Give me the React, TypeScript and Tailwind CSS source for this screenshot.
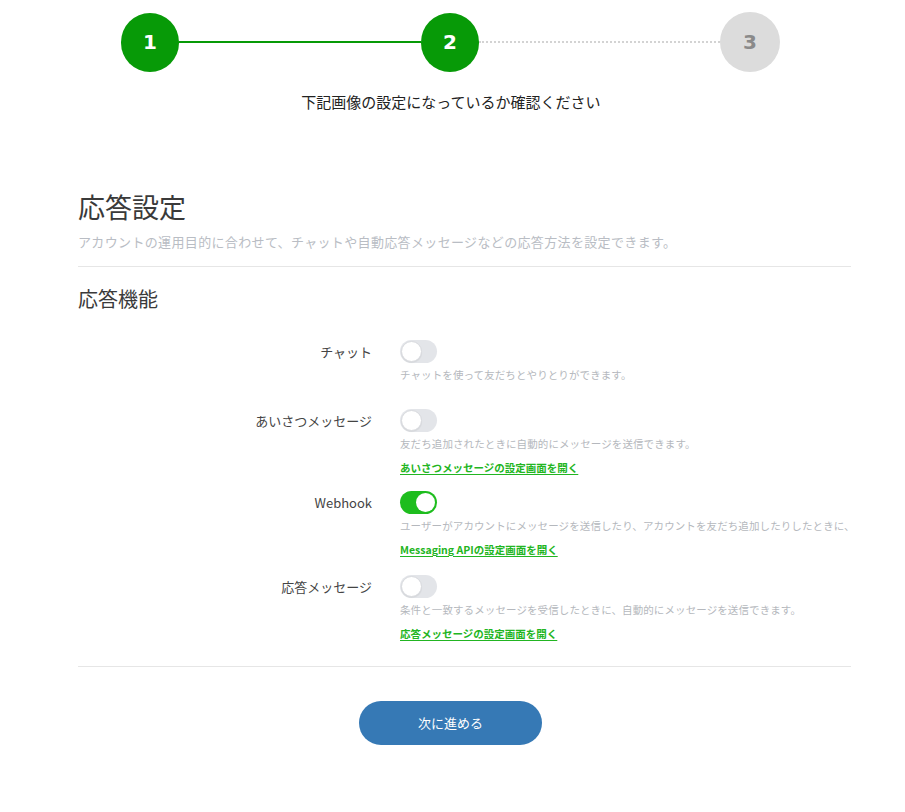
import React from 'react';

type Item = {
  label: string;
  on: boolean;
  desc: string;
  link?: string;
  pb: string;
};

const items: Item[] = [
  {label: 'チャット', on: false, desc: 'チャットを使って友だちとやりとりができます。', pb: 'pb-[26px]'},
  {
    label: 'あいさつメッセージ',
    on: false,
    desc: '友だち追加されたときに自動的にメッセージを送信できます。',
    link: 'あいさつメッセージの設定画面を開く',
    pb: 'pb-[15px]',
  },
  {
    label: 'Webhook',
    on: true,
    desc: 'ユーザーがアカウントにメッセージを送信したり、アカウントを友だち追加したりしたときに、',
    link: 'Messaging APIの設定画面を開く',
    pb: 'pb-[17px]',
  },
  {
    label: '応答メッセージ',
    on: false,
    desc: '条件と一致するメッセージを受信したときに、自動的にメッセージを送信できます。',
    link: '応答メッセージの設定画面を開く',
    pb: '',
  },
];

function Toggle({on}: {on: boolean}) {
  return on ? (
    <div className="w-[37px] h-[23px] rounded-full bg-[#1ebd1e] flex items-center justify-end px-[2px]">
      <div className="w-[19px] h-[19px] rounded-full bg-white" />
    </div>
  ) : (
    <div className="w-[37px] h-[23px] rounded-full bg-[#e3e5e9] flex items-center px-[1px]">
      <div className="w-[21px] h-[21px] rounded-full bg-white border border-[#d8dade] shadow-[0_1px_1px_rgba(0,0,0,0.06)]" />
    </div>
  );
}

export default function App() {
  return (
    <div className="w-[905px] h-[812px] bg-white font-['Noto_Sans_CJK_JP',sans-serif] text-[#333]">
      {/* stepper */}
      <div className="pt-[12px] pl-[121px] flex items-center">
        <div className="w-[58px] h-[59px] rounded-full flex items-center justify-center bg-[#079a07] text-white font-['DejaVu_Sans',sans-serif] font-bold text-[20px]">
          1
        </div>
        <div className="w-[242px] h-[2px] bg-[#079a07]" />
        <div className="w-[58px] h-[59px] rounded-full flex items-center justify-center bg-[#079a07] text-white font-['DejaVu_Sans',sans-serif] font-bold text-[20px]">
          2
        </div>
        <div className="w-[241px] border-t-2 border-dotted border-[#d3d3d3]" />
        <div className="w-[60px] h-[60px] rounded-full flex items-center justify-center bg-[#dcdcdc] text-[#8a8a8a] font-['DejaVu_Sans',sans-serif] font-bold text-[20px]">
          3
        </div>
      </div>
      <p className="mt-[19px] pr-[3px] text-center text-[15px] leading-[22px] text-[#222]">
        下記画像の設定になっているか確認ください
      </p>

      <div className="pl-[78px] pr-[54px]">
        <h1 className="mt-[76px] text-[27px] leading-[36px] text-[#3a3a3a]">応答設定</h1>
        <p className="mt-[7px] text-[13px] leading-[20px] tracking-[0.35px] text-[#b9bdc4]">
          アカウントの運用目的に合わせて、チャットや自動応答メッセージなどの応答方法を設定できます。
        </p>
        <div className="mt-[14px] border-t border-[#e6e6e6]" />
        <h2 className="mt-[18px] text-[20px] leading-[28px] text-[#3a3a3a]">応答機能</h2>

        <div className="mt-[27px] flex flex-col">
          {items.map((it) => (
            <div key={it.label} className={`flex gap-[28px] ${it.pb}`}>
              <div className="w-[294px] shrink-0 text-right text-[13px] leading-[23px] text-[#444]">
                {it.label}
              </div>
              <div className="flex-1 min-w-0">
                <Toggle on={it.on} />
                <p className="mt-[4px] text-[10.5px] leading-[16px] tracking-[0.1px] text-[#b5b8bd] whitespace-nowrap">
                  {it.desc}
                </p>
                {it.link && (
                  <a className="mt-[8px] block w-fit text-[10.5px] leading-[16px] font-bold text-[#22b522] underline underline-offset-2">
                    {it.link}
                  </a>
                )}
              </div>
            </div>
          ))}
        </div>

        <div className="mt-[24px] border-t border-[#e6e6e6]" />
      </div>

      <div className="mt-[34px] pl-[359px] flex">
        <button className="w-[183px] h-[44px] rounded-full bg-[#3679b5] text-white text-[13px]">
          次に進める
        </button>
      </div>
    </div>
  );
}
